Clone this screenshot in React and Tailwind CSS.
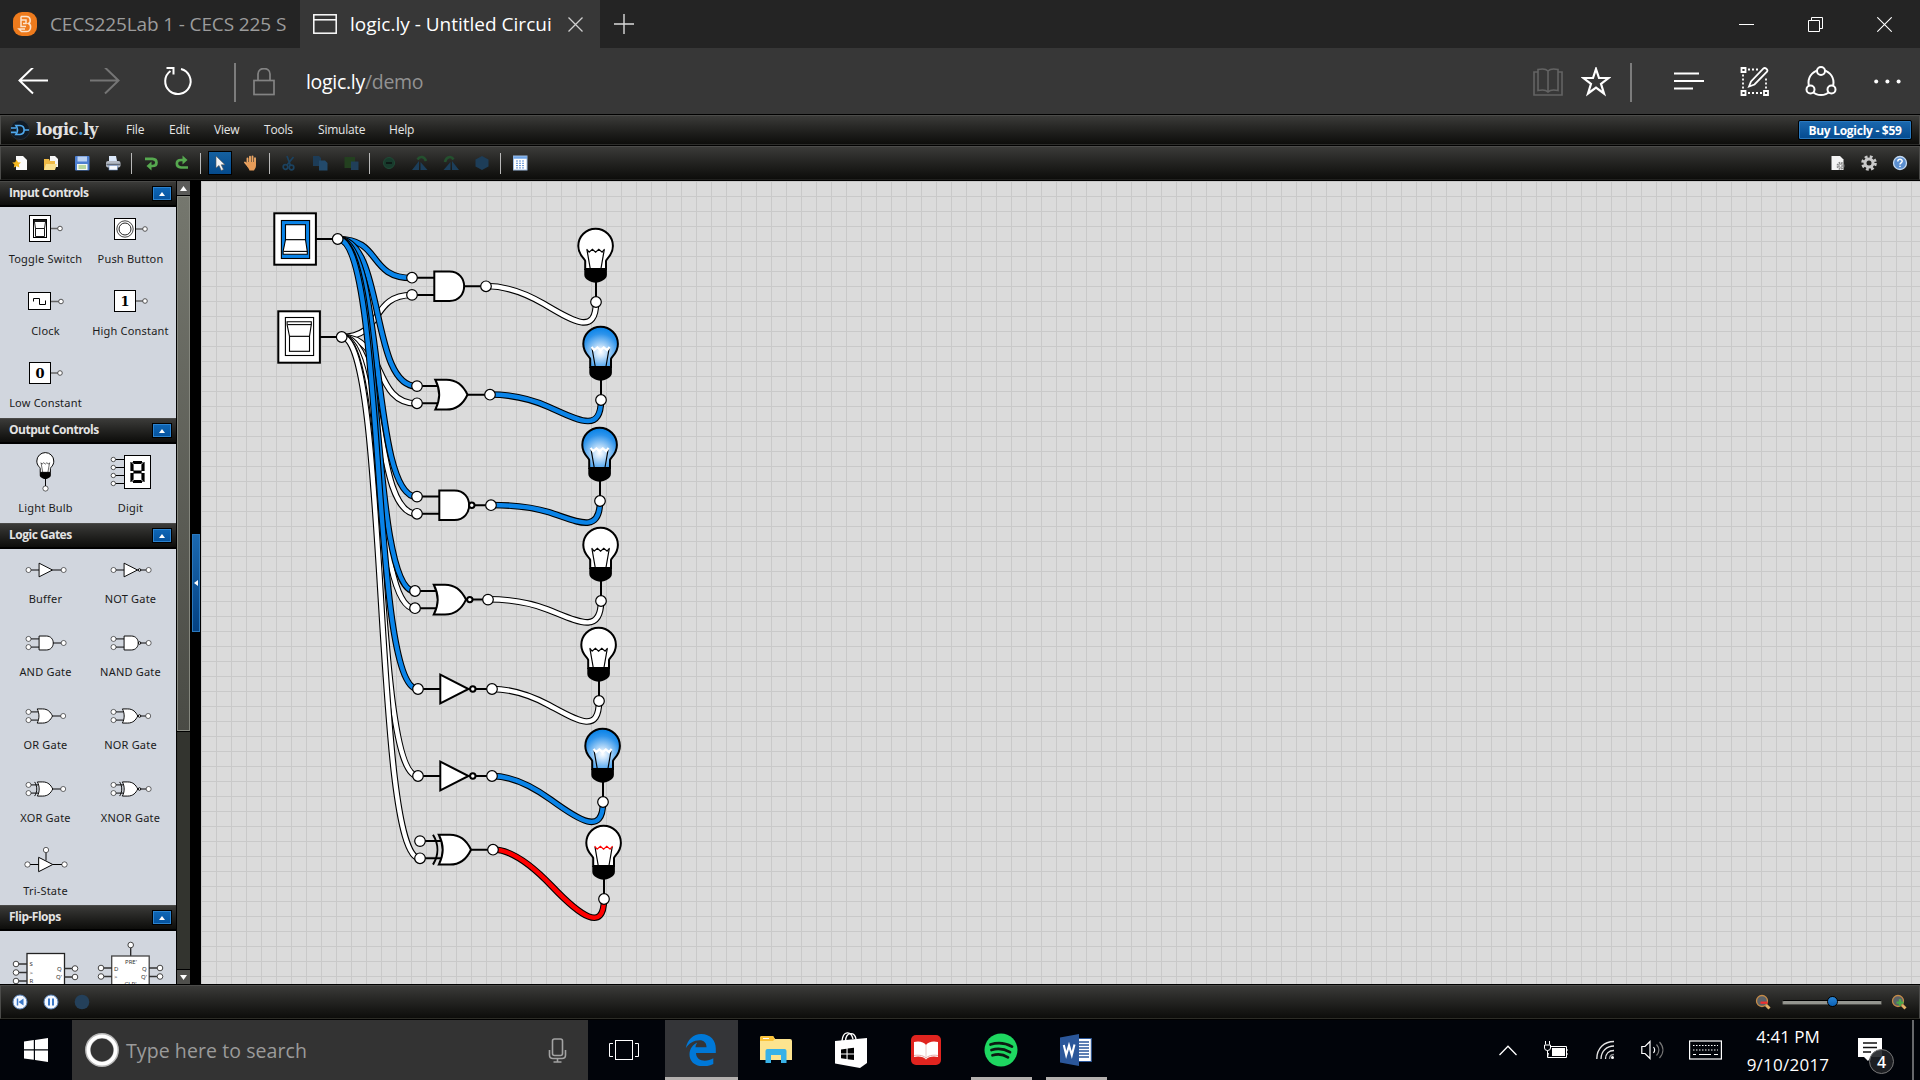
import React from 'react';

const UI = 'font-["Open_Sans","Noto_Sans",sans-serif]';
const BAR = 'bg-gradient-to-b from-[#3b3b39] to-[#0d0d0b]';
const BLUE = '#0a84e8';

/* ---------- circuit primitives ---------- */

function Pin({ x, y }) {
  return <circle cx={x} cy={y} r="5.3" fill="#fff" stroke="#000" strokeWidth="1.2" />;
}

/* Switch output to gate input: an S curve that leaves and arrives horizontally. */
function feedPath([x0, y0], [x1, y1]) {
  const d = (x1 - x0) * 0.6;
  return `M${x0} ${y0} C${x0 + d} ${y0} ${x1 - d} ${y1} ${x1} ${y1}`;
}

/* Gate output to bulb: leaves horizontally, sags below the bulb and rises into it. */
function sagPath([x0, y0], [x1, y1]) {
  const dx = x1 - x0;
  const dy = y1 - y0;
  const mx = dx * 0.53;
  const my = dy * 0.55 + 9.4;
  const slope = 0.37 + dy * 0.0138;
  const cx = mx - my / slope;
  const a = dx * 0.255;
  return `M${x0} ${y0} Q${x0 + cx} ${y0} ${x0 + mx} ${y0 + my} C${x0 + mx + a} ${y0 + my + a * slope} ${x1} ${y1 + 34} ${x1} ${y1}`;
}

function Wire({ from, to, color, sag }) {
  const d = sag ? sagPath(from, to) : feedPath(from, to);
  return (
    <g fill="none">
      <path d={d} stroke="#000" strokeWidth="6.6" />
      <path d={d} stroke={color} strokeWidth="4.4" />
    </g>
  );
}

/* Origin is the vertical middle of the gate at the input pin column. */
function Gate({ x, y, type, s = 1 }) {
  const two = !['NOT', 'BUF', 'TRI'].includes(type);
  const curved = ['OR', 'NOR', 'XOR', 'XNOR'].includes(type);
  const neg = ['NOT', 'NAND', 'NOR', 'XNOR'].includes(type);
  const xor = type === 'XOR' || type === 'XNOR';
  const o = type === 'OR' ? -0.5 : 0;
  let body;
  if (type === 'AND' || type === 'NAND') body = 'M22.3 -14.7H37.5C57 -14.7 57 14.7 37.5 14.7H22.3Z';
  else if (curved)
    body = 'M18.8 -14.9H30C41 -14.9 47 -8.5 51 0C47 8.5 41 14.9 30 14.9H18.8C23.7 5.5 23.7 -5.5 18.8 -14.9Z';
  else body = 'M22.3 -14.4L50.5 0L22.3 14.4Z';
  const out = type === 'OR' || type === 'XOR' || type === 'NOR' ? 73 : 74;
  return (
    <g transform={`translate(${x} ${y}) scale(${s})`} stroke="#000" strokeWidth="2">
      {two ? <path d="M0 -8.6H24M0 8.6H24M50 0H74" /> : <path d="M0 0H24M50 0H74" />}
      {type === 'TRI' && <path d="M37 -29V-8" />}
      <g transform={`translate(${o} 0)`}>
        <path d={body} fill="#fff" />
        {xor && <path d="M13 -14.9C18.8 -5.5 18.8 5.5 13 14.9" fill="none" />}
      </g>
      {neg && <circle cx="54.8" cy="0" r="2.7" fill="#fff" />}
      {two ? (
        <>
          <Pin x={0} y={-8.6} />
          <Pin x={0} y={8.6} />
        </>
      ) : (
        <Pin x={0} y={0} />
      )}
      {type === 'TRI' && <Pin x={37} y={-29} />}
      <Pin x={out} y={0} />
    </g>
  );
}

function Bulb({ x, y, state = 'off', s = 1 }) {
  const on = state === 'on';
  return (
    <g transform={`translate(${x} ${y}) scale(${s})`}>
      <path d="M0 -20V0" stroke="#000" strokeWidth="2" />
      <g transform="translate(-.4 0)">
        <path
          d="M-10.4 -33V-41C-10.8 -43.6 -17.3 -46.6 -17.3 -56A17.3 17.3 0 0 1 17.3 -56C17.3 -46.6 10.8 -43.6 10.4 -41V-33Z"
          fill={on ? 'url(#glow)' : '#fff'}
          stroke="#000"
          strokeWidth="2"
        />
        <path d="M-11.3 -33H11.3V-27C11.3 -23 5 -19.3 0 -19.3S-11.3 -23 -11.3 -27Z" />
        <path d="M-8.6 -52L-5.3 -33M8.6 -52L5.3 -33" stroke="#000" strokeWidth="1.2" />
        <path
          d="M-9 -53L-6.5 -49.8L-3.2 -52.6L0 -49.8L3.2 -52.6L6.5 -49.8L9 -53"
          fill="none"
          stroke={on ? '#fff' : state === 'err' ? '#f00' : '#000'}
          strokeWidth={on ? 2.2 : 1.2}
        />
      </g>
      <Pin x={0} y={0} />
    </g>
  );
}

/* Origin is the output pin. */
function Toggle({ x, y, on }) {
  return (
    <g transform={`translate(${x} ${y})`} stroke="#000">
      <path d="M-22 0H0" strokeWidth="2" />
      <rect x="-63.4" y="-25.7" width="41.6" height="51.4" fill="#fff" strokeWidth="2" />
      <g transform={on ? '' : 'scale(1 -1)'} strokeWidth="1.1">
        <rect x="-56.3" y="-18.5" width="28.2" height="38" fill={on ? BLUE : '#fff'} />
        <rect x="-52.2" y="-14.3" width="20" height="15" fill="#fff" />
        <path d="M-52.2 .7H-32.2L-30.4 12.4V15.3H-54.6V12.4Z" fill="#fff" />
        <path d="M-54.2 12.4H-30.4" fill="none" />
      </g>
      <Pin x={0} y={0} />
    </g>
  );
}

function Circuit() {
  const A = [337.7, 239];
  const B = [341.7, 337];
  const rows = [
    { out: [486, 286], b: [596, 302], st: 'off' },
    { out: [490, 394.5], b: [601, 400], st: 'on' },
    { out: [491, 505], b: [600, 501], st: 'on' },
    { out: [488, 599.3], b: [601, 601], st: 'off' },
    { out: [492, 689], b: [599, 701], st: 'off' },
    { out: [492, 776], b: [603, 802], st: 'on' },
    { out: [493, 849.5], b: [604, 899], st: 'err' },
  ];
  const col = { off: '#fff', on: BLUE, err: '#f00' };
  return (
    <svg className="block" width="1719" height="803" viewBox="201 181 1719 803">
      <defs>
        <radialGradient id="glow" gradientUnits="userSpaceOnUse" cx="0" cy="-48" r="24">
          <stop offset="0" stopColor="#fff" />
          <stop offset=".2" stopColor="#cfe6fb" />
          <stop offset=".75" stopColor="#2f94eb" />
          <stop offset="1" stopColor={BLUE} />
        </radialGradient>
      </defs>
      <Wire from={B} to={[412, 295]} color="#fff" />
      <Wire from={B} to={[417, 403.6]} color="#fff" />
      <Wire from={B} to={[417, 514]} color="#fff" />
      <Wire from={B} to={[415, 608.6]} color="#fff" />
      <Wire from={B} to={[418, 776]} color="#fff" />
      <Wire from={B} to={[420, 858.6]} color="#fff" />
      <Wire from={A} to={[412, 278]} color={BLUE} />
      <Wire from={A} to={[417, 386.4]} color={BLUE} />
      <Wire from={A} to={[417, 497]} color={BLUE} />
      <Wire from={A} to={[415, 591.4]} color={BLUE} />
      <Wire from={A} to={[418, 689]} color={BLUE} />
      {rows.map((r, i) => (
        <Wire key={i} from={r.out} to={r.b} color={col[r.st]} sag />
      ))}
      <Toggle x={337.7} y={239} on />
      <Toggle x={341.7} y={337} />
      <Gate x={412} y={286.3} type="AND" />
      <Gate x={417} y={394.7} type="OR" />
      <Gate x={417} y={505.2} type="NAND" />
      <Gate x={415} y={599.6} type="NOR" />
      <Gate x={418} y={689} type="NOT" />
      <Gate x={418} y={776} type="NOT" />
      <Gate x={420} y={849.7} type="XOR" />
      {rows.map((r, i) => (
        <Bulb key={i} x={r.b[0]} y={r.b[1]} state={r.st} />
      ))}
    </svg>
  );
}

/* ---------- sidebar ---------- */

function SectionHead({ title }) {
  return (
    <div className={`${BAR} flex h-[26px] shrink-0 items-center justify-between border-b-2 border-t border-b-black border-t-[#4a4a48] pl-[9px] pr-1`}>
      <span className={`${UI} pb-[2px] text-[12px] font-bold leading-none tracking-[-0.5px] text-[#e4e4e4]`}>{title}</span>
      <span className="flex h-[15px] w-5 items-center justify-center border border-black bg-[#0f62ae]">
        <span className="flex h-[13px] w-[18px] items-center justify-center border border-[#2c83cf] bg-gradient-to-b from-[#0f66b5] to-[#0654a0]">
          <svg width="6" height="4"><path d="M3 0L6 4H0Z" fill="#fff" /></svg>
        </span>
      </span>
    </div>
  );
}

function Item({ label, cell, icon, children }) {
  return (
    <div className={`flex flex-col items-center ${cell}`}>
      <svg className={`block w-[85px] ${icon}`} overflow="visible">{children}</svg>
      <span className='h-4 whitespace-nowrap font-["Noto_Sans","Open_Sans",sans-serif] text-[11px] leading-4 tracking-[0.2px] text-[#1b1b1b]'>{label}</span>
    </div>
  );
}

const S = 0.475;

function OutPin({ x1, x2, y }) {
  return (
    <>
      <path d={`M${x1} ${y}H${x2}`} stroke="#666" strokeWidth="1.5" />
      <circle cx={x2} cy={y} r="2.3" fill="#fff" stroke="#444" strokeWidth=".9" />
    </>
  );
}

function Constant({ v }) {
  return (
    <>
      <OutPin x1={47} x2={57} y={22} />
      <rect x="26.5" y="11.5" width="21" height="21" fill="#fff" stroke="#000" />
      <text x="37" y="27" textAnchor="middle" fontSize="13" fontWeight="bold" fontFamily="DejaVu Serif">{v}</text>
    </>
  );
}

function GateItem({ type, label }) {
  return (
    <Item label={label} cell="h-[73px]" icon="h-[42px]">
      {type === 'TRI' ? <Gate x={24.5} y={23.5} type="TRI" s={0.5} /> : <Gate x={25.5} y={21} type={type} s={S} />}
    </Item>
  );
}

function Digit() {
  return (
    <Item label="Digit" cell="h-[79px]" icon="h-14">
      {[15.5, 23.5, 31.5, 39.5].map((y) => (
        <g key={y}>
          <path d={`M26 ${y}H36`} stroke="#000" />
          <circle cx="25.3" cy={y} r="2.2" fill="#fff" stroke="#444" strokeWidth=".9" />
        </g>
      ))}
      <rect x="36.5" y="11.5" width="26" height="33" fill="#fff" stroke="#000" />
      <g stroke="#000" strokeWidth="3.2">
        <path d="M45 18.5H54M45 28H54M45 37.5H54" />
        <path d="M44 18V27M55 18V27M44 29V38M55 29V38" />
      </g>
      <path d="M42 16.5L46 20.5M57 16.5L53 20.5M42 28L46 28M53 28H57M42 39.5L46 35.5M57 39.5L53 35.5" stroke="#fff" strokeWidth=".8" />
    </Item>
  );
}

function FlipFlops() {
  const t = { fontSize: '6', fontFamily: 'Noto Sans', fill: '#333' };
  const lead = (x1, x2, y) => (
    <g key={`${x1}-${y}`}>
      <path d={`M${x1} ${y}H${x2}`} stroke="#333" strokeWidth="1.5" />
      <circle cx={x2} cy={y} r="2.8" fill="#fff" stroke="#444" />
    </g>
  );
  return (
    <svg className="block h-[53px] w-[176px]">
      <rect x="27" y="22.5" width="37.5" height="50" fill="#fff" stroke="#222" strokeWidth="1.3" />
      {[33, 41.5, 50].map((y) => lead(27, 16, y))}
      {[37.5, 46].map((y) => lead(64, 75, y))}
      <text x="29.5" y="35" {...t}>S</text>
      <text x="29.5" y="43.5" {...t}>&gt;</text>
      <text x="29.5" y="52" {...t}>R</text>
      <text x="57" y="39.5" {...t}>Q</text>
      <text x="56" y="48" {...t}>Q'</text>
      <path d="M130.7 14V25" stroke="#222" strokeWidth="1.3" />
      <circle cx="130.7" cy="14" r="2.8" fill="#fff" stroke="#444" />
      <rect x="111.7" y="25" width="37.5" height="50" fill="#fff" stroke="#444" strokeWidth="1.3" />
      {[37, 45.5].map((y) => lead(112, 101, y))}
      {[37, 45.5].map((y) => lead(149, 160, y))}
      <text x="125" y="32.5" {...t}>PRE'</text>
      <text x="114" y="39.5" {...t}>D</text>
      <text x="114" y="47.5" {...t}>&gt;</text>
      <text x="142" y="39.5" {...t}>Q</text>
      <text x="141" y="47.5" {...t}>Q'</text>
      <text x="124.5" y="54.5" {...t}>CLR'</text>
    </svg>
  );
}

const COLS = 'grid grid-cols-[85px_85px] shrink-0 px-[3px]';

function Sidebar() {
  return (
    <div className="flex h-[803px] w-[176px] flex-col overflow-hidden bg-[#d1d6de]">
      <SectionHead title="Input Controls" />
      <div className={`${COLS} h-[211px]`}>
        <Item label="Toggle Switch" cell="h-[72px]" icon="h-11">
          <OutPin x1={47} x2={57} y={21.5} />
          <rect x="26.5" y="8.500" width="21" height="26" fill="#fff" stroke="#000" />
          <rect x="30.500" y="12.500" width="13" height="18" fill="#fff" stroke="#000" />
          <path d="M31 14H43" stroke="#000" strokeWidth="1.800" />
          <path d="M31.500 15L32.500 21.500M42.500 15L41.500 21.500M32.500 21.500H41.500V29.500H32.500Z" fill="none" stroke="#000" strokeWidth=".9" />
        </Item>
        <Item label="Push Button" cell="h-[72px]" icon="h-11">
          <OutPin x1={47} x2={57} y={22} />
          <rect x="26.5" y="11.5" width="21" height="21" fill="#fff" stroke="#000" />
          <circle cx="37" cy="22" r="8.2" fill="#fff" stroke="#444" />
          <circle cx="37" cy="22" r="6" fill="#fff" stroke="#222" />
        </Item>
        <Item label="Clock" cell="h-[72px]" icon="h-11">
          <OutPin x1={48} x2={58} y={22.5} />
          <rect x="25.5" y="13.5" width="22" height="17" fill="#fff" stroke="#000" />
          <path d="M30.5 22.5V19.5H36.5V25.5H42.5V21.5" fill="none" stroke="#000" />
        </Item>
        <Item label="High Constant" cell="h-[72px]" icon="h-11"><Constant v="1" /></Item>
        <Item label="Low Constant" cell="h-[67px]" icon="h-11"><Constant v="0" /></Item>
      </div>
      <SectionHead title="Output Controls" />
      <div className={`${COLS} h-[79px]`}>
        <Item label="Light Bulb" cell="h-[79px]" icon="h-14"><Bulb x={42.5} y={44.5} s={0.49} /></Item>
        <Digit />
      </div>
      <SectionHead title="Logic Gates" />
      <div className={`${COLS} h-[356px]`}>
        <GateItem type="BUF" label="Buffer" />
        <GateItem type="NOT" label="NOT Gate" />
        <GateItem type="AND" label="AND Gate" />
        <GateItem type="NAND" label="NAND Gate" />
        <GateItem type="OR" label="OR Gate" />
        <GateItem type="NOR" label="NOR Gate" />
        <GateItem type="XOR" label="XOR Gate" />
        <GateItem type="XNOR" label="XNOR Gate" />
        <GateItem type="TRI" label="Tri-State" />
      </div>
      <SectionHead title="Flip-Flops" />
      <FlipFlops />
    </div>
  );
}

function Scrollbar() {
  return (
    <div className="ml-px flex h-[803px] w-[13px] flex-col bg-[#33342f]">
      <div className="flex h-[15px] items-center justify-center border-b border-black bg-[#5b5b59]">
        <svg width="7" height="5"><path d="M3.5 0L7 5H0Z" fill="#fff" /></svg>
      </div>
      <div className="h-[535px] border border-[#85877e] border-b-[#8b8d85] bg-gradient-to-b from-[#75776e] to-[#4a4b45]" />
      <div className="h-px bg-black" />
      <div className="grow" />
      <div className="flex h-[15px] items-center justify-center border-t border-black bg-[#50504d]">
        <svg width="7" height="5"><path d="M3.5 5L7 0H0Z" fill="#fff" /></svg>
      </div>
    </div>
  );
}

/* ---------- application toolbar icons, all 16x16 ---------- */

const toolIcons = {
  page: (
    <>
      <path d="M4 1H11L15 5V15H4Z" fill="#fafafa" />
      <path d="M4.5 4.5L6 7.2L9 7.6L6.8 9.6L7.4 12.6L4.6 11.2L1.8 12.6L2.4 9.6L.2 7.6L3.2 7.2Z" fill="#f5b921" />
    </>
  ),
  open: (
    <>
      <path d="M7 1H12L15 4V12H7Z" fill="#f5f5f5" />
      <path d="M1 4H6L7 6H12V15H1Z" fill="#f0ba45" />
      <path d="M3 9H14L12 15H1Z" fill="#fbe08c" />
    </>
  ),
  save: (
    <>
      <rect x="1" y="1" width="14.500" height="14.500" rx="1" fill="#4c7ed0" />
      <rect x="3.500" y="1.500" width="9.500" height="5" fill="#b9d0f2" />
      <rect x="3" y="9" width="10.500" height="6" fill="#f3f7ee" />
      <path d="M4.500 11H12M4.500 13H12" stroke="#7db54f" />
    </>
  ),
  print: (
    <>
      <path d="M4 1H11L12 6H4Z" fill="#dbe8fa" />
      <rect x="1" y="6" width="14.500" height="6.500" rx="2" fill="#b4bac4" />
      <path d="M1.500 9.500H15" stroke="#656c78" strokeWidth="1.500" />
      <rect x="4" y="10.500" width="8.500" height="4.500" fill="#f7f9fc" stroke="#6b8cc0" strokeWidth=".6" />
    </>
  ),
  undo: (
    <>
      <path d="M2 3.800H9.500C14.800 4 14.800 11 9.500 11H8" fill="none" stroke="#56a84f" strokeWidth="2.700" />
      <path d="M8.500 6.500V15.500L3.500 11Z" fill="#56a84f" />
    </>
  ),
  redo: (
    <>
      <path d="M14 12.500H7C1.500 12 1.500 5 7 5H9" fill="none" stroke="#56a84f" strokeWidth="2.700" />
      <path d="M8.500 .5V9.500L13.500 5Z" fill="#56a84f" />
    </>
  ),
  pointer: <path d="M4 1V13L7 10.500L9.300 15.500L11.500 14.500L9.200 9.800H13Z" fill="#f4f4f4" stroke="#555" strokeWidth=".6" />,
  hand: (
    <>
      <path d="M4.500 8V3.500M7 8V1.800M9.500 8V1.500M12 8V3.300M2 7.500L5 11" stroke="#eda765" strokeWidth="1.900" strokeLinecap="round" />
      <path d="M3.700 7H13V10.500C13 13 11.500 14 11 15.500H6.500C6 13.500 4 12 3.700 10Z" fill="#e79c58" />
    </>
  ),
  cut: (
    <g fill="none" stroke="#1b4260" strokeWidth="1.700">
      <path d="M6 1L9.500 10.500M12.500 2L6 10" />
      <circle cx="4.500" cy="12" r="2.300" />
      <circle cx="10.500" cy="12.500" r="2.300" />
    </g>
  ),
  copy: (
    <>
      <path d="M1 1H7L9 3V11H1Z" fill="#1d3c57" />
      <path d="M7 5.500H13L15.500 8V15.500H7Z" fill="#234a6b" />
    </>
  ),
  paste: (
    <>
      <path d="M1.500 2H12V13H1.500Z" fill="#23401f" />
      <path d="M8 6.500H15.500V15H8Z" fill="#203f59" />
    </>
  ),
  minus: (
    <>
      <circle cx="8" cy="8" r="5.500" fill="#183a2c" stroke="#1f4a35" />
      <path d="M5 8H11" stroke="#0e1a16" strokeWidth="2" />
    </>
  ),
  rotL: (
    <>
      <path d="M0 15L7 6V15ZM8.500 15V7L15.500 15Z" fill="#1c3e5a" />
      <path d="M5.500 4.500C8 .5 12.500 1.500 14 6" fill="none" stroke="#24502e" strokeWidth="2.600" />
    </>
  ),
  rotR: (
    <>
      <path d="M.5 15L7.500 7V15ZM9 15V6L16 15Z" fill="#1c3e5a" />
      <path d="M2 7C3 2 8 0 10.500 4.500" fill="none" stroke="#24502e" strokeWidth="2.600" />
    </>
  ),
  hex: <path d="M8 1L14.500 4.500V11.500L8 15L1.500 11.500V4.500Z" fill="#1d3d58" />,
  table: (
    <>
      <rect x="1.500" y="1" width="13.500" height="14" fill="#fff" stroke="#9dbbe2" />
      <path d="M1.500 2.500H15" stroke="#6fa4e6" strokeWidth="2.500" />
      <path d="M4 6H13M4 8.300H13M4 10.600H13M4 12.900H13" stroke="#5c8fd6" strokeDasharray="2 1" />
    </>
  ),
  pageGear: (
    <>
      <path d="M1.500 1H10L13.500 4.500V15H1.500Z" fill="#f4f4f4" />
      <circle cx="10.500" cy="10.800" r="3" fill="#ddd" stroke="#888" strokeWidth="2" strokeDasharray="1.500 .9" />
      <circle cx="10.500" cy="10.800" r="1.400" fill="#fff" stroke="#888" strokeWidth=".8" />
    </>
  ),
  gear: (
    <>
      <circle cx="8" cy="8" r="6.300" fill="none" stroke="#c9c9c9" strokeWidth="3" strokeDasharray="2.700 2.250" />
      <circle cx="8" cy="8" r="4" fill="none" stroke="#c9c9c9" strokeWidth="3" />
    </>
  ),
  help: (
    <>
      <circle cx="8" cy="8" r="6.500" fill="#5b8fd0" stroke="#c3d9f2" strokeWidth="1.300" />
      <path d="M5.800 6.500C5.800 3.600 10.300 3.700 10.200 6.300C10.100 7.900 8 7.800 8 9.500M8 10.700V12" stroke="#fff" strokeWidth="1.500" fill="none" />
    </>
  ),
};

function Tool({ name, active }) {
  return (
    <div className="flex w-[31px] items-center justify-center">
      <div className={`flex h-6 w-6 items-center justify-center ${active ? 'border border-black bg-gradient-to-b from-[#15609f] to-[#054a8c]' : ''}`}>
        <svg width="16" height="16" viewBox="0 0 16 16">{toolIcons[name]}</svg>
      </div>
    </div>
  );
}

function Sep() {
  return (
    <div className="flex w-[7px] justify-center">
      <div className="h-[21px] w-px bg-[#b9b9b9]" />
    </div>
  );
}

/* ---------- browser chrome ---------- */

function TabBar() {
  return (
    <div className="flex h-12 bg-[#242424]">
      <div className="flex w-[300px] items-center pl-[13px]">
        <svg width="24" height="24" viewBox="0 0 24 24">
          <rect width="24" height="24" rx="9" fill="#ee7b1d" />
          <path d="M8 4.500H13.500C18 4.500 18 10.500 15.500 11.500C19 13 18 19.500 13.500 19.500H8.500L6 17H12M8 4.500V14.500H13M8 8H13V11.500H10" fill="none" stroke="#fbe3cd" strokeWidth="1.500" />
        </svg>
        <div className={`${UI} ml-[13px] w-[237px] overflow-hidden whitespace-nowrap text-[19px] leading-7 tracking-[-0.120px] text-[#9c9c9c]`}>CECS225Lab 1 - CECS 225 S</div>
      </div>
      <div className="flex w-[300px] items-center bg-[#373737] pl-[13px]">
        <svg width="24" height="20" viewBox="0 0 24 20" fill="none" stroke="#fff" strokeWidth="1.500">
          <rect x=".8" y=".8" width="22.400" height="18.400" />
          <path d="M1 5.800H23" />
        </svg>
        <div className={`${UI} ml-[13px] w-[204px] overflow-hidden whitespace-nowrap text-[19px] leading-7 text-white`}>logic.ly - Untitled Circui</div>
        <svg className="ml-[14px]" width="15" height="15"><path d="M.5 .5L14.500 14.500M14.500 .5L.5 14.500" stroke="#d0d0d0" strokeWidth="1.300" /></svg>
      </div>
      <div className="flex w-[48px] items-center justify-center">
        <svg width="20" height="20"><path d="M10 0V20M0 10H20" stroke="#dadada" strokeWidth="1.400" /></svg>
      </div>
      <div className="flex grow items-center justify-end gap-[54px] pr-7">
        <svg width="15" height="15"><path d="M0 7.500H15" stroke="#fff" /></svg>
        <svg width="15" height="15" fill="none" stroke="#fff"><path d="M.5 3.500H11.500V14.500H.5ZM3.500 3.500V.5H14.500V11.500H11.500" /></svg>
        <svg width="15" height="15"><path d="M.3 .3L14.700 14.700M14.700 .3L.3 14.700" stroke="#fff" strokeWidth="1.100" /></svg>
      </div>
    </div>
  );
}

function NavBar() {
  return (
    <div className="flex h-[66px] items-center bg-[#373737] pt-[2px]">
      <svg className="ml-[18px]" width="30" height="28" fill="none" stroke="#fff" strokeWidth="2"><path d="M30 12.500H2M15 -.5L1.500 12.500L15 25.500" /></svg>
      <svg className="ml-[42px]" width="30" height="28" fill="none" stroke="#757575" strokeWidth="2"><path d="M0 12.500H28M15 -.5L28.500 12.500L15 25.500" /></svg>
      <svg className="ml-[42px]" width="32" height="32" fill="none" stroke="#fff" strokeWidth="2">
        <path d="M19 3A12.700 12.700 0 1 1 8.500 5" />
        <path d="M4.500 2H11.500V8.500" />
      </svg>
      <div className="ml-10 h-[39px] w-[2px] bg-[#7c7c7c]" />
      <svg className="ml-[17px]" width="22" height="28" fill="none" stroke="#838383" strokeWidth="1.700">
        <rect x="1" y="12.500" width="20" height="14" />
        <path d="M5 12.500V6C5 -1.300 17 -1.300 17 6V12.500" />
      </svg>
      <div className={`${UI} ml-[31px] whitespace-nowrap text-[19.500px] leading-7 tracking-[-0.300px] text-white`}>
        logic.ly<span className="text-[#929292]">/demo</span>
      </div>
      <div className="grow" />
      <svg width="30" height="28" fill="none" stroke="#636363" strokeWidth="1.600">
        <path d="M15 3C13 .8 8 .8 5 1.500V22.500C8 21.800 13 21.800 15 24C17 21.800 22 21.800 25 22.500V1.500C22 .8 17 .8 15 3ZM15 3V24M5 4H1V27H29V4H25" />
      </svg>
      <svg className="ml-[18px]" width="30" height="30" fill="none" stroke="#fff" strokeWidth="2.200">
        <path d="M15 2L18 11H27.500L20 16.800L23 26.500L15 20.500L7 26.500L10 16.800L2.500 11H12Z" />
      </svg>
      <div className="ml-[19px] h-[39px] w-[2px] bg-[#7c7c7c]" />
      <svg className="ml-[42px]" width="30" height="20" stroke="#fff" strokeWidth="2"><path d="M0 1.500H25M0 9H30M0 16.500H19" /></svg>
      <svg className="ml-9" width="30" height="30" fill="none" stroke="#fff" strokeWidth="1.800">
        <path d="M1.500 1H5.500V5H1.500ZM1.500 24H5.500V28H1.500ZM24 24H28V28H24Z" />
        <path d="M8 2.500H18M3 7.500V22.500M8 26H23M26 11.500V22.500" strokeDasharray="2 2" />
        <path d="M9 19.500L11 14.500L23.500 1.500C25 .1 28.500 2.500 27 4.700L14.500 17.500Z" />
      </svg>
      <svg className="ml-[35px]" width="32" height="32" fill="none" stroke="#fff" strokeWidth="2">
        <circle cx="16" cy="16.500" r="12.500" />
        <g fill="#373737">
          <circle cx="16" cy="5" r="4" />
          <circle cx="5.500" cy="23.500" r="4" />
          <circle cx="26.500" cy="23.500" r="4" />
        </g>
      </svg>
      <svg className="ml-[37px] mr-[19px]" width="27" height="6" fill="#fff">
        <circle cx="2.200" cy="2.500" r="2" /><circle cx="13.400" cy="2.500" r="2" /><circle cx="24.600" cy="2.500" r="2" />
      </svg>
    </div>
  );
}

function MenuBar() {
  return (
    <div className={`${BAR} mt-px flex h-[30px] items-center border border-[#4b4b49] border-b-[#2c2c2a]`}>
      <svg className="ml-[9px]" width="20" height="20">
        <circle cx="10" cy="10" r="9.600" fill="#111b26" stroke="#2b3540" strokeWidth=".7" />
        <path d="M1 8H6M1 12.300H6M14 10H19M6 5.500H10C15.500 6 15.500 14 10 14.500H6C8 11.500 8 8.500 6 5.500Z" fill="none" stroke="#4fa9ee" strokeWidth="1.700" />
      </svg>
      <div className='ml-[6px] w-[64px] whitespace-nowrap font-["DejaVu_Serif",serif] text-[16px] font-bold leading-5 tracking-[-0.350px] text-[#e2e2e2]'>
        logic<span className="text-[#3f9be8]">.</span>ly
      </div>
      <div className={`${UI} flex pl-[26px] text-[12px] leading-4 tracking-[-0.2px] text-[#e6e6e6]`}>
        <span className="w-[43px]">File</span>
        <span className="w-[45px]">Edit</span>
        <span className="w-[50px]">View</span>
        <span className="w-[54px]">Tools</span>
        <span className="w-[71px]">Simulate</span>
        <span>Help</span>
      </div>
      <div className={`${UI} ml-auto mr-[7px] flex h-5 w-[114px] items-center justify-center whitespace-nowrap rounded-[2px] border border-black bg-gradient-to-b from-[#1b69b0] to-[#044a8f] pt-[2px] text-[12px] font-bold leading-none tracking-[-0.280px] text-white shadow-[inset_0_0_0_1px_#2a78bd]`}>
        Buy Logicly - $59
      </div>
    </div>
  );
}

function ToolBar() {
  return (
    <div className={`${BAR} mb-px mt-px flex h-[34px] items-center border border-[#4b4b49] border-b-[#20201e] pl-[3px] pr-[4px]`}>
      <Tool name="page" /><Tool name="open" /><Tool name="save" /><Tool name="print" />
      <Sep />
      <Tool name="undo" /><Tool name="redo" />
      <Sep />
      <Tool name="pointer" active /><Tool name="hand" />
      <Sep />
      <Tool name="cut" /><Tool name="copy" /><Tool name="paste" />
      <Sep />
      <Tool name="minus" /><Tool name="rotL" /><Tool name="rotR" /><Tool name="hex" />
      <Sep />
      <Tool name="table" />
      <div className="grow" />
      <Tool name="pageGear" /><Tool name="gear" /><Tool name="help" />
    </div>
  );
}

function Magnifier({ plus }) {
  return (
    <svg width="17" height="17" viewBox="0 0 17 17">
      <path d="M10 10L14.500 14.500" stroke="#e2b069" strokeWidth="3" />
      <circle cx="7" cy="7" r="5.500" fill="#5c6268" stroke="#c68b47" strokeWidth="1.300" />
      {plus ? <path d="M9 5V12M5.500 8.700H12.500" stroke="#4aa94a" strokeWidth="2.300" /> : <path d="M5.500 8.700H12.500" stroke="#ee2f2f" strokeWidth="2.300" />}
    </svg>
  );
}

function StatusBar() {
  return (
    <div className={`${BAR} mt-px flex h-[34px] items-center border border-[#4b4b49] border-b-[#2c2c26]`}>
      <svg className="ml-[11px]" width="16" height="16">
        <circle cx="8" cy="8" r="7" fill="#f4f8ff" stroke="#5c86bd" />
        <path d="M5.500 4.500V11.500" stroke="#3a78c8" strokeWidth="1.500" /><path d="M11.500 4.500V11.500L6.500 8Z" fill="#3a78c8" />
      </svg>
      <svg className="ml-[15px]" width="16" height="16">
        <circle cx="8" cy="8" r="7" fill="#f4f8ff" stroke="#5c86bd" />
        <path d="M6 4.500V11.500M10 4.500V11.500" stroke="#3a78c8" strokeWidth="2" />
      </svg>
      <svg className="ml-[15px]" width="16" height="16"><circle cx="8" cy="8" r="7.300" fill="#24405a" /></svg>
      <div className="grow" />
      <Magnifier />
      <div className="ml-[10px] mr-[9px] mt-px flex h-[5px] w-[100px] items-center justify-center rounded-[2px] border border-[#4e4e4a] border-t-black bg-[#94958f]">
        <div className="mt-[-2px] h-[11px] w-[11px] shrink-0 rounded-full border border-black bg-gradient-to-b from-[#2a86d6] to-[#0960b4]" />
      </div>
      <Magnifier plus />
      <div className="w-[11px]" />
    </div>
  );
}

/* ---------- Windows taskbar ---------- */

function TaskButton({ w, active, running, line = 'w-[61px]', children }) {
  return (
    <div className={`flex h-[60px] flex-col items-center ${w} ${active ? 'bg-[#343538]' : ''}`}>
      <div className="flex h-[57px] items-center justify-center pt-[3px]">{children}</div>
      {running && <div className={`h-[3px] ${line} bg-[#b3b0ae]`} />}
    </div>
  );
}

function Taskbar() {
  return (
    <div className="flex h-[60px] bg-[#01040a]">
      <div className="flex w-[72px] items-center justify-center">
        <svg width="24" height="24" fill="#fff"><path d="M0 3.500L9.800 2.100V11.300H0ZM11 1.900L24 0V11.300H11ZM0 12.500H9.800V21.800L0 20.500ZM11 12.500H24V24L11 22Z" /></svg>
      </div>
      <div className="flex w-[516px] items-center bg-[#333]">
        <svg className="ml-[13px]" width="34" height="34">
          <circle cx="17" cy="17" r="14.200" fill="none" stroke="#b9b9b9" strokeWidth="5.500" />
          <circle cx="17" cy="17" r="13.700" fill="none" stroke="#fff" strokeWidth="3.600" />
        </svg>
        <span className={`${UI} ml-[7px] whitespace-nowrap pt-[2px] text-[19.500px] leading-7 tracking-[0.080px] text-[#9b9b9b]`}>Type here to search</span>
        <div className="grow" />
        <svg className="mr-[21px]" width="19" height="25" fill="none" stroke="#a3a3a3" strokeWidth="1.600">
          <rect x="4.500" y="1" width="10" height="16.500" rx="2" />
          <path d="M1.500 12V17C1.500 19.500 3 20.500 5 20.500H14C16 20.500 17.500 19.500 17.500 17V12M9.500 20.500V23.800M5.500 24H13.500" />
        </svg>
      </div>
      <TaskButton w="w-[77px]">
        <svg className="ml-[-5px]" width="30" height="20" fill="none" stroke="#fff"><rect x="6.500" y=".5" width="17" height="19" /><path d="M4 3.500H.5V16.500H4M26 3.500H29.500V16.500H26" /></svg>
      </TaskButton>
      <TaskButton w="w-[73px]" active running line="w-[73px]">
        <svg className="ml-[-1px]" width="32" height="32" viewBox="0 0 32 32">
          <path fill="#0078d7" d="M.8 14.200C2.200 5.700 8.300 0 16.200 0C25.500 0 30.800 6.600 30.800 14.800V19H11C11.400 28 22 28.200 28.300 24.200V30C17 35.500 4.500 31 4.500 20.500C4.500 14.800 7.800 10.700 12.200 8.500C11 10.500 10.600 11.800 10.500 13.200H21.500C21.500 9 19 6.300 14.500 6.300C9 6.300 3.600 9.500 .8 14.200Z" />
        </svg>
      </TaskButton>
      <TaskButton w="w-[76px]">
        <svg width="32" height="28" viewBox="0 0 32 28">
          <path d="M0 2Q0 0 2 0H13L15 3H30Q32 3 32 5V24H0Z" fill="#fde48f" />
          <path d="M0 2Q0 0 2 0H13L15 3L13 5H0Z" fill="#fbc33a" />
          <path d="M3 2.500H9" stroke="#fff" />
          <path d="M5.500 27V15Q5.500 13 7.500 13H24.500Q26.500 13 26.500 15V27H21V19H11V27Z" fill="#38b2e8" />
        </svg>
      </TaskButton>
      <TaskButton w="w-[74px]">
        <svg width="32" height="36" viewBox="0 0 32 36">
          <path d="M7 9C8 -1.500 16 -1.500 18 7M10.500 9C11 -.5 19.500 -.5 21 7" stroke="#fff" fill="none" strokeWidth="1.400" />
          <path d="M0 9L32 6V31L25 36L0 31.500Z" fill="#fff" />
          <path d="M6 17.500L11.500 16.800V21.500H6ZM12.600 16.600L19 15.700V21.500H12.600ZM6 22.600H11.500V27L6 26.200ZM12.600 22.600H19V28L12.600 27.200Z" fill="#000" />
        </svg>
      </TaskButton>
      <TaskButton w="w-[76px]">
        <svg width="30" height="30" viewBox="0 0 30 30">
          <rect width="30" height="30" rx="5" fill="#e0241f" />
          <path d="M3 7C8 5.500 13 7 15 10C17 7 22 5.500 27 7V22C22 20.500 17 22 15 24.500C13 22 8 20.500 3 22Z" fill="#fff" />
          <path d="M15 10V24" stroke="#e9c9c6" /><path d="M3 20.500C9 19.500 13 21 15 23C17 21 21 19.500 27 20.500" fill="none" stroke="#d99" strokeWidth=".8" />
        </svg>
      </TaskButton>
      <TaskButton w="w-[75px]" running>
        <svg className="ml-[-1px]" width="34" height="34" viewBox="0 0 34 34">
          <circle cx="17" cy="17" r="16.500" fill="#1ed760" />
          <path d="M6.500 11.500C13 9.500 21.500 10 28 13.700M7.500 17C13 15.300 20.500 16 26 19.200M8.500 22.300C13 21 19.500 21.500 24 24.300" fill="none" stroke="#0c1a12" strokeLinecap="round" strokeWidth="2.700" />
        </svg>
      </TaskButton>
      <TaskButton w="w-[75px]" running>
        <svg className="ml-[-1px]" width="32" height="32" viewBox="0 0 32 32">
          <rect x="17" y="4.500" width="14.300" height="23" fill="#fff" stroke="#2b579a" />
          <path d="M19 8H29M19 11H29M19 14H29M19 17H29M19 20H29M19 23H29" stroke="#2b579a" strokeWidth="1.300" />
          <path d="M0 3.500L19 0V32L0 28.500Z" fill="#2b579a" />
          <path d="M3.800 11L6.200 21L9 11.500L11.800 21L14.500 10.500" fill="none" stroke="#fff" strokeWidth="2.100" />
        </svg>
      </TaskButton>
      <div className="grow" />
      <div className="flex items-center">
        <svg width="18" height="11" fill="none" stroke="#fff" strokeWidth="1.300"><path d="M.5 10L9 1.200L17.500 10" /></svg>
        <svg className="ml-[27px]" width="24" height="18" fill="none" stroke="#fff">
          <path d="M7 5.500H22.500V16.500H4.500V12M22.500 9H24M22.500 13H24" /><rect x="8" y="7" width="13" height="8" fill="#fff" stroke="none" />
          <path d="M1.500 0V3.500M5.500 0V3.500M.5 4H6.500V7Q6.500 9.500 3.500 9.500Q.5 9.500 .5 7ZM3.500 9.500V16.500H5" fill="#01040a" />
        </svg>
        <svg className="ml-7" width="20" height="20" fill="none" stroke="#e6e6e6" strokeWidth="1.300">
          <path d="M.8 19C.8 8.500 8 1.500 18 1.500M5 19C5 11 11 6 18 6M9.500 19C9.500 13.500 13 10.500 18 10.500" /><path d="M13.500 19C13.500 16 15.500 14.500 18 14.500" opacity=".6" />
          <circle cx="16.500" cy="17.500" r="1.500" fill="#fff" stroke="none" />
        </svg>
        <svg className="ml-[25px]" width="23" height="20" fill="none" stroke="#fff" strokeWidth="1.200">
          <path d="M.8 6.500H4L9 1.500V18.500L4 13.500H.8Z" /><path d="M12.500 7C14 9 14 11 12.500 13" /><path d="M15.500 4.500C18.500 8 18.500 12 15.500 15.500M18.500 2C23 7 23 13 18.500 18" stroke="#777" />
        </svg>
        <svg className="ml-[25px]" width="33" height="20" fill="none" stroke="#fff" strokeWidth="1.200">
          <rect x=".6" y="1" width="31.800" height="18" /><path d="M4 5.500H29M4 10H29" strokeDasharray="1.500 1.500" /><path d="M4 14.500H7M10 14.500H22M25 14.500H29" />
        </svg>
      </div>
      <div className={`${UI} ml-[21px] flex w-[90px] flex-col items-center pt-[3px] text-[17px] leading-[28px] text-white`}>
        <span>4:41 PM</span>
        <span className="tracking-[0.240px]">9/10/2017</span>
      </div>
      <div className="relative ml-[25px] w-[38px]">
        <svg className="absolute left-0 top-[18px]" width="24" height="25"><path d="M0 0H24V19H13L10 23L6 19H0Z" fill="#fff" /><path d="M5 5H19M5 9.500H19M5 14H13" stroke="#111" strokeWidth="1.300" /></svg>
        <div className={`${UI} absolute left-[11px] top-[29px] flex h-[25px] w-[25px] items-center justify-center rounded-full border border-[#777] bg-[#1f2125]/90 text-[16px] font-semibold leading-none text-white`}>4</div>
      </div>
      <div className="ml-[16px] mr-[6px] h-[60px] w-[2px] bg-[#66686c]" />
    </div>
  );
}

export default function App() {
  return (
    <div className="flex h-[1080px] w-[1920px] flex-col overflow-hidden bg-black">
      <TabBar />
      <NavBar />
      <MenuBar />
      <ToolBar />
      <div className="flex h-[803px] shrink-0">
        <Sidebar />
        <Scrollbar />
        <div className="flex w-[11px] items-start justify-center bg-black pt-[353px]">
          <div className="flex h-[98px] w-2 items-center justify-center border border-[#2a78bd] bg-gradient-to-b from-[#1b69b0] to-[#044182]">
            <svg className="shrink-0" width="4" height="6"><path d="M4 0V6L0 3Z" fill="#fff" /></svg>
          </div>
        </div>
        <div className="w-[1719px] bg-[#dbdbdb] bg-[linear-gradient(to_right,#c9c9c9_1px,transparent_1px),linear-gradient(to_bottom,#c9c9c9_1px,transparent_1px)] bg-[size:15px_15px]">
          <Circuit />
        </div>
      </div>
      <StatusBar />
      <div className="h-px shrink-0" />
      <Taskbar />
    </div>
  );
}
